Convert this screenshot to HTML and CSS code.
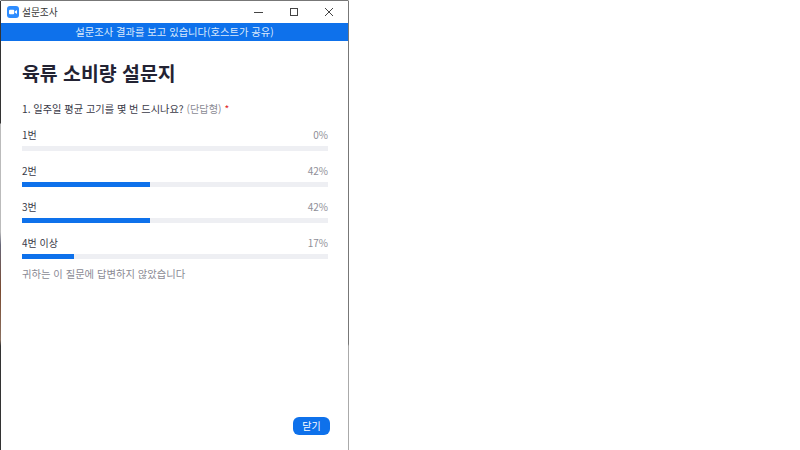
FILE: index.html
```html
<!DOCTYPE html>
<html lang="ko">
<head>
<meta charset="utf-8">
<title>설문조사</title>
<link rel="stylesheet" href="styles.css">
</head>
<body>
<div class="window">
  <div class="titlebar">
    <div class="title-left">
      <svg class="app-icon" width="12" height="12" viewBox="0 0 12 12"><rect width="12" height="12" rx="3" fill="#2d8cff"/><rect x="2" y="3.7" width="5.2" height="4.6" rx="1" fill="#fff"/><path d="M7.8 5.6 10 4v4L7.8 6.6z" fill="#fff"/></svg>
      <span class="title-text">설문조사</span>
    </div>
    <div class="controls">
      <div class="ctl"><svg width="10" height="10" viewBox="0 0 10 10"><path d="M0 5.5h9" stroke="#444" fill="none"/></svg></div>
      <div class="ctl"><svg width="10" height="10" viewBox="0 0 10 10"><rect x="1.5" y="1.5" width="7" height="7" stroke="#444" fill="none"/></svg></div>
      <div class="ctl"><svg width="10" height="10" viewBox="0 0 10 10"><path d="M1 1l8 8M9 1l-8 8" stroke="#444" fill="none"/></svg></div>
    </div>
  </div>
  <div class="banner">설문조사 결과를 보고 있습니다(호스트가 공유)</div>
  <div class="content">
    <h1 class="heading">육류 소비량 설문지</h1>
    <p class="question">1. 일주일 평균 고기를 몇 번 드시나요? <span class="qtype">(단답형)</span> <span class="req">*</span></p>
    <div class="results">
      <div class="row"><div class="labels"><span>1번</span><span class="pct">0%</span></div><div class="track"><div class="fill" style="width:0%"></div></div></div>
      <div class="row"><div class="labels"><span>2번</span><span class="pct">42%</span></div><div class="track"><div class="fill" style="width:41.8%"></div></div></div>
      <div class="row"><div class="labels"><span>3번</span><span class="pct">42%</span></div><div class="track"><div class="fill" style="width:41.8%"></div></div></div>
      <div class="row"><div class="labels"><span>4번 이상</span><span class="pct">17%</span></div><div class="track"><div class="fill" style="width:17%"></div></div></div>
    </div>
    <p class="note">귀하는 이 질문에 답변하지 않았습니다</p>
    <div class="footer"><button class="close-btn">닫기</button></div>
  </div>
</div>
</body>
</html>
```
FILE: styles.css
```css
html, body {
  margin: 0;
  padding: 0;
  width: 800px;
  height: 450px;
  overflow: hidden;
  background: #fff;
  font-family: "Noto Sans CJK KR", "Open Sans", sans-serif;
}
.window {
  box-sizing: border-box;
  width: 349px;
  height: 450px;
  display: flex;
  flex-direction: column;
  border-top: 1px solid #777;
  border-left: 1px solid transparent;
  border-right: 1px solid transparent;
  background-color: #fff;
  background-origin: border-box;
  background-clip: border-box;
  background-repeat: no-repeat;
  background-size: 1px 100%;
  background-position: left top, right top;
  background-image:
    linear-gradient(#333 0, #333 123px, #bbb 124px, #bbb 232px, #667 245px, #7a4a30 290px, #8a7060 340px, #333 346px, #333 100%),
    linear-gradient(#777 0, #777 344px, #aaa 346px, #aaa 100%);
}
.titlebar {
  height: 22px;
  display: flex;
  justify-content: space-between;
  align-items: center;
  padding: 0 2px 0 6px;
  flex: none;
}
.title-left {
  display: flex;
  align-items: center;
  gap: 3px;
}
.app-icon { display: block; }
.title-text {
  font-size: 9.7px;
  line-height: 14px;
  color: #333;
}
.controls {
  display: flex;
  align-self: stretch;
}
.ctl {
  width: 35px;
  display: flex;
  align-items: center;
  justify-content: center;
}
.banner {
  flex: none;
  height: 18px;
  background: #0e71eb;
  color: #dbe9fb;
  font-size: 10.3px;
  line-height: 18px;
  text-align: center;
}
.content {
  flex: 1;
  display: flex;
  flex-direction: column;
  padding: 0 20px 15px 21px;
  min-height: 0;
}
.heading {
  margin: 18px 0 0;
  font-size: 19.4px;
  line-height: 28px;
  font-weight: 700;
  color: #232333;
}
.question {
  margin: 14px 0 0;
  font-size: 10.2px;
  line-height: 16px;
  color: #3a3a48;
}
.qtype { color: #8a8a94; }
.req { color: #e02828; }
.results {
  margin-top: 11px;
  display: flex;
  flex-direction: column;
  gap: 13px;
}
.labels {
  display: flex;
  justify-content: space-between;
  font-size: 10px;
  line-height: 14px;
  color: #3a3a48;
}
.pct { color: #8f8f98; }
.track {
  margin-top: 4px;
  height: 5px;
  background: #eeeff3;
}
.fill {
  height: 100%;
  background: #0e71eb;
}
.note {
  margin: 7px 0 0;
  font-size: 10.3px;
  line-height: 16px;
  color: #8a8a94;
}
.footer {
  margin-top: auto;
  display: flex;
  justify-content: flex-end;
}
.close-btn {
  width: 37px;
  height: 18px;
  margin-right: -2px;
  border: 0;
  border-radius: 6px;
  padding: 0;
  background: #0e71eb;
  color: #fff;
  font-family: inherit;
  font-size: 10px;
  line-height: 18px;
}
```
